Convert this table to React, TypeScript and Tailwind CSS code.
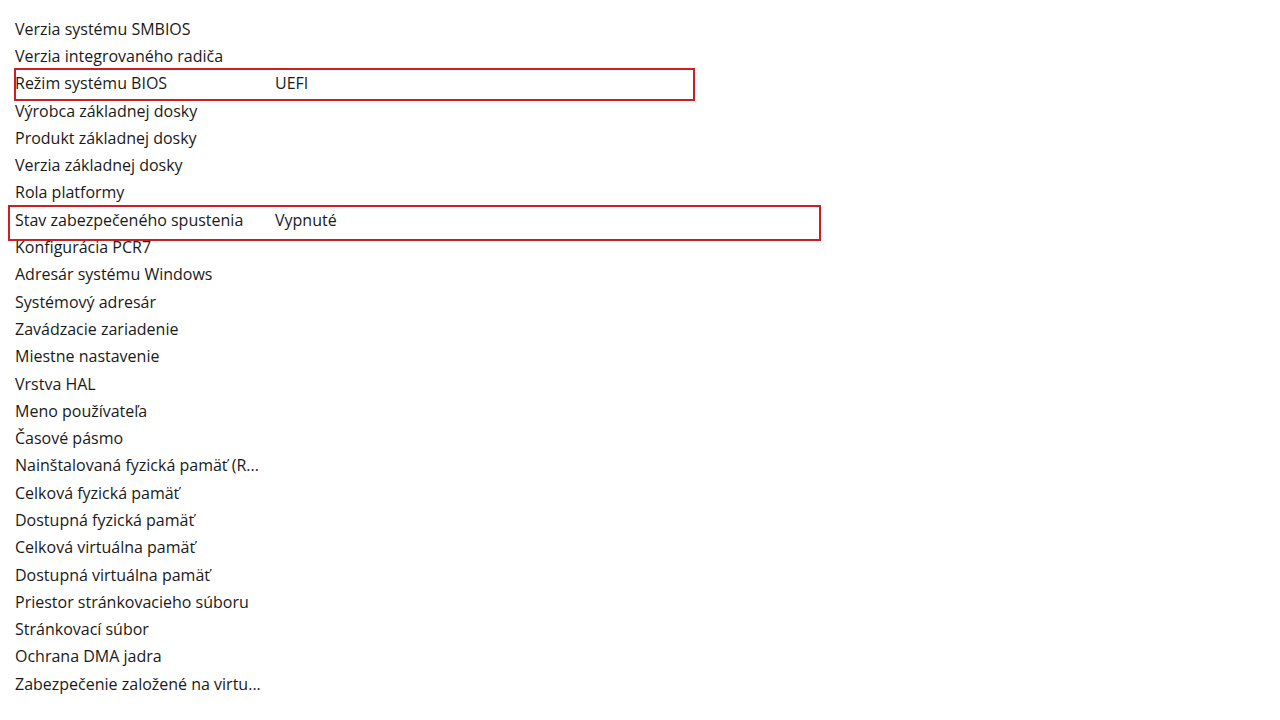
import React from "react";

const rows: [string, string][] = [
  ["Verzia systému SMBIOS", ""],
  ["Verzia integrovaného radiča", ""],
  ["Režim systému BIOS", "UEFI"],
  ["Výrobca základnej dosky", ""],
  ["Produkt základnej dosky", ""],
  ["Verzia základnej dosky", ""],
  ["Rola platformy", ""],
  ["Stav zabezpečeného spustenia", "Vypnuté"],
  ["Konfigurácia PCR7", ""],
  ["Adresár systému Windows", ""],
  ["Systémový adresár", ""],
  ["Zavádzacie zariadenie", ""],
  ["Miestne nastavenie", ""],
  ["Vrstva HAL", ""],
  ["Meno používateľa", ""],
  ["Časové pásmo", ""],
  ["Nainštalovaná fyzická pamäť (R...", ""],
  ["Celková fyzická pamäť", ""],
  ["Dostupná fyzická pamäť", ""],
  ["Celková virtuálna pamäť", ""],
  ["Dostupná virtuálna pamäť", ""],
  ["Priestor stránkovacieho súboru", ""],
  ["Stránkovací súbor", ""],
  ["Ochrana DMA jadra", ""],
  ["Zabezpečenie založené na virtu...", ""],
];

export default function App() {
  return (
    <div
      className="relative w-[1280px] h-[720px] bg-white overflow-hidden text-[#1a1a1a] text-[16px]"
      style={{ fontFamily: '"Open Sans", "Noto Sans", sans-serif' }}
    >
      <div className="flex flex-col pt-[15px] pl-[15px]">
        {rows.map(([k, v], i) => (
          <div key={i} className="flex h-[27.3px] items-center leading-none">
            <div className="w-[260px] whitespace-nowrap">{k}</div>
            <div className="whitespace-nowrap">{v}</div>
          </div>
        ))}
      </div>
      <div className="absolute left-[14px] top-[68px] w-[681px] h-[33px] border-2 border-[#cc1f24]" />
      <div className="absolute left-[8px] top-[205px] w-[813px] h-[36px] border-2 border-[#cc1f24]" />
    </div>
  );
}
